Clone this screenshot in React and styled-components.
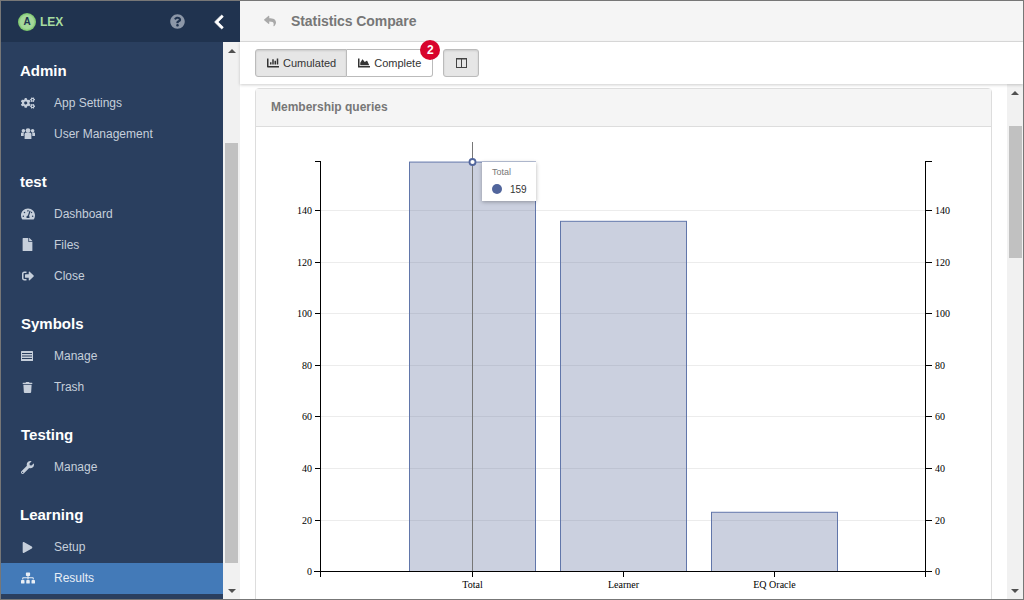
import React from 'react';
import styled, { createGlobalStyle } from 'styled-components';
import { FaCogs, FaTachometerAlt, FaFile, FaSignOutAlt, FaTrash, FaWrench, FaPlay, FaSitemap, FaQuestionCircle, FaChevronLeft, FaReply, FaChartBar, FaChartArea } from 'react-icons/fa';

const Global = createGlobalStyle`
  html, body { margin: 0; padding: 0; overflow: hidden; }
  body { font-family: "Liberation Sans", Arial, sans-serif; font-size: 12px; }
  * { box-sizing: border-box; }
`;

const Win = styled.div`
  width: 1024px; height: 600px; border: 1px solid #777;
  display: flex; overflow: hidden; background: #fff;
`;
const Side = styled.aside`width: 239px; flex: none; display: flex; flex-direction: column; height: 100%;`;
const Brand = styled.div`
  height: 41px; flex: none; background: #20334f; display: flex; align-items: center; padding: 0 13px 0 17px;
`;
const Logo = styled.div`
  width: 18px; height: 18px; border-radius: 50%; background: radial-gradient(circle, #a5d89a 0 50%, #6cc05c 75%, #4f9c48 100%);
  color: #20334f; font-size: 10px; font-weight: bold; display: flex; align-items: center; justify-content: center;
`;
const LogoText = styled.span`color: #a6dca0; font-size: 12px; font-weight: bold; margin-left: 4px; flex: 1;`;
const Help = styled.span`color: #8c97a8; display: flex; font-size: 15px; margin-right: 26px;`;
const Collapse = styled.span`color: #fff; display: flex; font-size: 16px; & svg { stroke: #fff; stroke-width: 24; }`;
const SideBody = styled.div`flex: 1; display: flex; min-height: 0;`;
const Nav = styled.nav`width: 222px; flex: none; background: #2a3f5f; padding-top: 14px; overflow: hidden;`;
const Section = styled.section`margin-bottom: 18px;`;
const SectionTitle = styled.h3`
  margin: 0; height: 31.2px; line-height: ${p => p.$lh || 29}px; padding-left: ${p => p.$pad || 19}px; color: #fff; font-size: 15px; font-weight: bold;
`;
const Item = styled.a`
  height: 31px; display: flex; align-items: center; padding-left: 19px; color: #c6cfdb; font-size: 12px;
  background: ${p => p.$active ? '#437ab8' : 'transparent'};
  ${p => p.$active && 'color: #e8eef5;'}
`;
const ItemIcon = styled.span`
  width: 34px; flex: none; display: flex; font-size: ${p => p.$size || 14}px; padding-left: ${p => p.$pl ?? 1}px;
`;

const Scroll = styled.div`
  width: ${p => p.$w}px; flex: none; background: #f1f1f1; display: flex; flex-direction: column; align-items: center; height: 100%;
`;
const Arrow = styled.div`
  height: ${p => p.$h}px; flex: none; width: 100%; display: flex; align-items: center; justify-content: center;
  &::after {
    content: ''; border-left: 4px solid transparent; border-right: 4px solid transparent;
    ${p => p.$down ? 'border-top: 4px solid #505050;' : 'border-bottom: 4px solid #505050;'}
  }
`;
const Track = styled.div`flex: 1; width: 100%; padding: 0 ${p => p.$pr ?? 2}px 0 2px; display: flex; flex-direction: column;`;
const Thumb = styled.div`background: #c1c1c1; height: ${p => p.$h}px; margin-top: ${p => p.$top}px;`;

const Main = styled.main`flex: 1; min-width: 0; display: flex; flex-direction: column; height: 100%;`;
const TopBar = styled.header`
  height: 41px; flex: none; background: #f5f5f5; border-bottom: 1px solid #ddd; display: flex; align-items: center; padding-left: 24px; color: #777;
`;
const Back = styled.span`color: #a9a9a9; display: flex; font-size: 12px; margin-right: 15px;`;
const Title = styled.h1`margin: 0; font-size: 14px; font-weight: bold; color: #777; letter-spacing: -.08px;`;
const Toolbar = styled.div`
  height: 42px; flex: none; background: #fff; display: flex; align-items: flex-start; padding: 7px 0 0 15px;
  box-shadow: 0 1px 3px rgba(0,0,0,.2); position: relative; z-index: 1;
`;
const Group = styled.div`display: flex; position: relative;`;
const Btn = styled.button`
  height: 28px; padding: 0 ${p => p.$pr ?? 11}px 0 ${p => p.$pl ?? 11}px; display: flex; align-items: center; gap: 4px; font: 11px "Liberation Sans", Arial, sans-serif; color: #333;
  border: 1px solid #bbb; border-left-width: ${p => p.$noLeft ? 0 : 1}px; background: ${p => p.$on ? '#e6e6e6' : '#fff'};
  box-shadow: ${p => p.$on ? 'inset 0 1px 2px rgba(0,0,0,.12)' : 'none'};
  border-radius: ${p => p.$r || '0'};
  margin-left: ${p => p.$ml || 0}px;
  & svg { font-size: 12px; }
`;
const Badge = styled.span`
  position: absolute; right: -7px; top: -9px; width: 20px; height: 20px; border-radius: 50%; background: #d8042c; color: #fff;
  font-size: 12px; font-weight: bold; display: flex; align-items: center; justify-content: center;
`;
const Content = styled.div`flex: 1; min-height: 0; display: flex;`;
const ContentBody = styled.div`flex: 1; min-width: 0; padding: 4px 15px 0 15px; overflow: hidden;`;
const Panel = styled.div`
  border: 1px solid #ddd; border-radius: 4px 4px 0 0; height: 560px; background: #fff;
`;
const PanelHead = styled.div`
  height: 38px; background: #f5f5f5; border-bottom: 1px solid #ddd; display: flex; align-items: center; padding: 0 0 2px 15px;
  font-size: 12px; font-weight: bold; color: #777;
`;
const PanelBody = styled.div`position: relative; height: 473px;`;
const Tip = styled.div`
  position: absolute; left: 226px; top: 35px; width: 54px; height: 39px; background: #fff; box-shadow: 0 1px 4px rgba(0,0,0,.3);
  padding: 5px 0 0 10px; color: #333;
`;
const TipName = styled.div`font-size: 9px; color: #777; line-height: 11px;`;
const TipRow = styled.div`display: flex; align-items: center; font-size: 10px; margin-top: 6px; line-height: 12px;`;
const Dot = styled.span`width: 10px; height: 10px; border-radius: 50%; background: #51659c; margin: -3px 8px 0 0;`;
const Svg = styled.svg`display: block;`;
const Label = styled.text`font-family: "Liberation Serif", "Times New Roman", serif; font-size: 10px; fill: #000;`;

const UsersIcon = () => (
  <svg width="14" height="11" viewBox="0 0 14 11" fill="currentColor">
    <circle cx="7" cy="2.6" r="2.4" />
    <circle cx="2.4" cy="2.8" r="1.8" />
    <circle cx="11.6" cy="2.8" r="1.8" />
    <path d="M3.6 6.2c0-1 .8-1.4 1.6-1.4h3.6c.8 0 1.6.4 1.6 1.4V11H3.6z" />
    <path d="M0 5.4c0-.6.5-.9 1-.9h2.2c-.3.4-.5.9-.5 1.6V8H0z" />
    <path d="M14 5.4c0-.6-.5-.9-1-.9h-2.2c.3.4.5.9.5 1.6V8H14z" />
  </svg>
);
const ListIcon = () => (
  <svg width="12" height="10" viewBox="0 0 12 10">
    <rect width="12" height="10" rx=".6" fill="currentColor" />
    <rect x="1" y="2" width="10" height="1" fill="#2a3f5f" />
    <rect x="1" y="4.5" width="10" height="1" fill="#2a3f5f" />
    <rect x="1" y="7" width="10" height="1" fill="#2a3f5f" />
  </svg>
);

const sections = [
  { t: 'Admin', items: [[FaCogs, 'App Settings'], [UsersIcon, 'User Management']] },
  { t: 'test', items: [[FaTachometerAlt, 'Dashboard'], [FaFile, 'Files', 13], [FaSignOutAlt, 'Close', 12]] },
  { t: 'Symbols', pad: 20, items: [[ListIcon, 'Manage'], [FaTrash, 'Trash', 11]] },
  { t: 'Testing', pad: 20, lh: 28, items: [[FaWrench, 'Manage', 13]] },
  { t: 'Learning', lh: 28, items: [[FaPlay, 'Setup', 11], [FaSitemap, 'Results', 14, true]] },
];

const barY = v => 571.5 - v * 2.575;
const ticks = [[0, 571.5], [20, 520.5], [40, 468.5], [60, 416.5], [80, 365.5], [100, 313.5], [120, 262.5], [140, 210.5]];
const bars = [['Total', 159, 409.5], ['Learner', 136, 560.5], ['EQ Oracle', 23, 711.5]];

function Chart() {
  return (
    <Svg width="735" height="473" viewBox="256 127 735 473">
      {ticks.slice(1).map(([t, y]) => <line key={t} x1="320" x2="926" y1={y} y2={y} stroke="#ececec" />)}
      {bars.map(([n, v, x]) => (
        <g key={n}>
          <rect x={x} y={barY(v)} width="126" height={571.5 - barY(v)} fill="rgba(84,101,150,.3)" stroke="#6176aa" />
          <line x1={x + 63} x2={x + 63} y1="571.5" y2="577" stroke="#000" />
          <Label x={x + 63} y="588" textAnchor="middle">{n}</Label>
        </g>
      ))}
      <line x1="314" x2="932" y1="571.5" y2="571.5" stroke="#000" />
      <line x1="320.5" x2="320.5" y1="161" y2="577" stroke="#000" />
      <line x1="925.5" x2="925.5" y1="161" y2="577" stroke="#000" />
      <line x1="315" x2="320" y1="161.5" y2="161.5" stroke="#000" />
      <line x1="926" x2="932" y1="161.5" y2="161.5" stroke="#000" />
      {ticks.map(([t, y]) => (
        <g key={t}>
          <line x1="315" x2="320" y1={y} y2={y} stroke="#000" />
          <line x1="926" x2="932" y1={y} y2={y} stroke="#000" />
          <Label x="312" y={y + 3} textAnchor="end">{t}</Label>
          <Label x="935" y={y + 3}>{t}</Label>
        </g>
      ))}
      <line x1="472.5" x2="472.5" y1="142" y2="571" stroke="#777" />
      <circle cx="472.5" cy="162" r="3" fill="#fff" stroke="#51659c" strokeWidth="1.8" />
    </Svg>
  );
}

const ColumnsIcon = () => (
  <svg width="11" height="10" viewBox="0 0 11 10" fill="none" stroke="#444">
    <rect x=".5" y=".5" width="10" height="9" />
    <line x1="5.5" x2="5.5" y1="0" y2="10" />
    <line x1="0" x2="11" y1="1" y2="1" />
  </svg>
);

export default function App() {
  return (
    <Win>
      <Global />
      <Side>
        <Brand>
          <Logo>A</Logo>
          <LogoText>LEX</LogoText>
          <Help><FaQuestionCircle /></Help>
          <Collapse><FaChevronLeft /></Collapse>
        </Brand>
        <SideBody>
          <Nav>
            {sections.map(s => (
              <Section key={s.t}>
                <SectionTitle $pad={s.pad} $lh={s.lh}>{s.t}</SectionTitle>
                {s.items.map(([I, label, size, active]) => (
                  <Item key={label} $active={active}>
                    <ItemIcon $size={size} $pl={size && size < 13 ? 2 : 1}><I /></ItemIcon>{label}
                  </Item>
                ))}
              </Section>
            ))}
          </Nav>
          <Scroll $w={17}>
            <Arrow $h={17} />
            <Track><Thumb $h={420} $top={84} /></Track>
            <Arrow $h={17} $down />
          </Scroll>
        </SideBody>
      </Side>
      <Main>
        <TopBar>
          <Back><FaReply /></Back>
          <Title>Statistics Compare</Title>
        </TopBar>
        <Toolbar>
          <Group>
            <Btn $on $r="3px 0 0 3px" $pr={10}><FaChartBar />Cumulated</Btn>
            <Btn $r="0 3px 3px 0" $noLeft><FaChartArea />Complete</Btn>
            <Badge>2</Badge>
          </Group>
          <Btn $on $r="3px" $ml={10} $pl={12} $pr={11}><ColumnsIcon /></Btn>
        </Toolbar>
        <Content>
          <ContentBody>
            <Panel>
              <PanelHead>Membership queries</PanelHead>
              <PanelBody>
                <Chart />
                <Tip>
                  <TipName>Total</TipName>
                  <TipRow><Dot />159</TipRow>
                </Tip>
              </PanelBody>
            </Panel>
          </ContentBody>
          <Scroll $w={16}>
            <Arrow $h={17} />
            <Track $pr={1}><Thumb $h={132} $top={25} /></Track>
            <Arrow $h={17} $down />
          </Scroll>
        </Content>
      </Main>
    </Win>
  );
}
